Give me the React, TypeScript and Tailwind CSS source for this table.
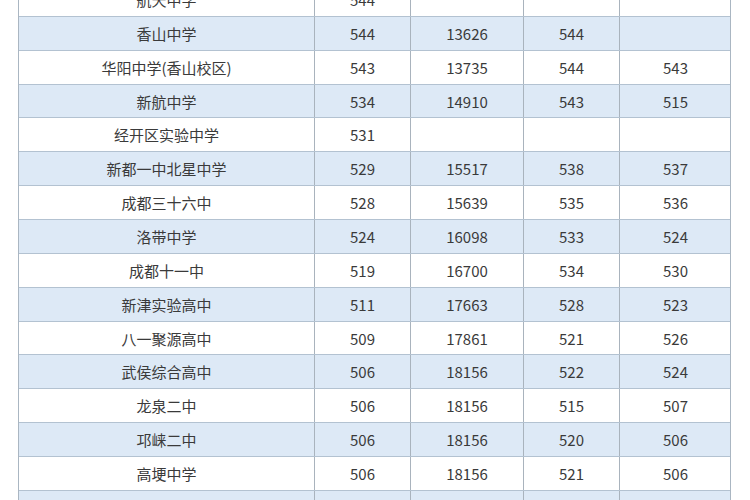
import React from "react";

type Row = [string, string, string, string, string];

const rows: Row[] = [
  ["航天中学", "544", "", "", ""],
  ["香山中学", "544", "13626", "544", ""],
  ["华阳中学(香山校区)", "543", "13735", "544", "543"],
  ["新航中学", "534", "14910", "543", "515"],
  ["经开区实验中学", "531", "", "", ""],
  ["新都一中北星中学", "529", "15517", "538", "537"],
  ["成都三十六中", "528", "15639", "535", "536"],
  ["洛带中学", "524", "16098", "533", "524"],
  ["成都十一中", "519", "16700", "534", "530"],
  ["新津实验高中", "511", "17663", "528", "523"],
  ["八一聚源高中", "509", "17861", "521", "526"],
  ["武侯综合高中", "506", "18156", "522", "524"],
  ["龙泉二中", "506", "18156", "515", "507"],
  ["邛崃二中", "506", "18156", "520", "506"],
  ["高埂中学", "506", "18156", "521", "506"],
  ["彭州中学", "505", "18290", "519", "505"],
];

const App: React.FC = () => {
  return (
    <div
      className="w-[750px] h-[500px] overflow-hidden bg-white pl-[18px] text-[15px] text-[#3a3a3a]"
      style={{ fontFamily: '"Noto Sans CJK SC", "Noto Sans", sans-serif' }}
    >
      <div className="-mt-[17px] w-[713px] border-l border-r border-[#aab6c2]">
        {rows.map((r, i) => (
          <div
            key={i}
            className={`grid grid-cols-[296px_96px_113px_96px_111px] h-[33.86px] border-b border-[#b3c2d1] ${
              i % 2 === 1 ? "bg-[#dde9f6]" : "bg-white"
            }`}
          >
            {r.map((c, j) => (
              <div
                key={j}
                className={`flex items-center justify-center leading-none ${
                  j < 4 ? "border-r border-[#a9b3bd]" : ""
                }`}
              >
                {c}
              </div>
            ))}
          </div>
        ))}
      </div>
    </div>
  );
};

export default App;
